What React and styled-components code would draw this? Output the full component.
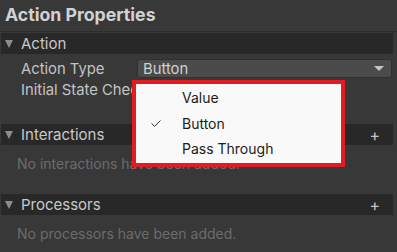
import React from "react";
import styled, { createGlobalStyle } from "styled-components";

const GlobalStyle = createGlobalStyle`
  html, body {
    margin: 0;
    padding: 0;
    background: #383838;
  }
  body {
    font-family: Inter, "Noto Sans", sans-serif;
  }
`;

const Panel = styled.div`
  position: relative;
  width: 397px;
  height: 252px;
  overflow: hidden;
  background: #383838;
  color: #c4c4c4;
  font-size: 14px;
`;

const Title = styled.h1`
  margin: 0 0 1px;
  height: 32px;
  padding-left: 5px;
  font-size: 17.7px;
  font-weight: 700;
  line-height: 30px;
  color: #d2d2d2;
  border-bottom: 1px solid #2c2c2c;
  box-sizing: border-box;
`;

const Header = styled.div`
  display: flex;
  align-items: center;
  height: 21px;
  margin: 0 4px 0 1px;
  padding: 0 13px 0 4px;
  background: #282828;
  color: #c8c8c8;
  font-size: 15px;
`;

const Caret = styled.span`
  width: 0;
  height: 0;
  margin-right: 8px;
  border-left: 4px solid transparent;
  border-right: 4px solid transparent;
  border-top: 8px solid #8c8c8c;
`;

const HeaderText = styled.span`
  flex: 1;
`;

const Plus = styled.span`
  font-size: 16px;
  line-height: 1;
  color: #c4c4c4;
`;

const Body = styled.div`
  padding: ${(p) => p.$pad};
`;

const Row = styled.div`
  display: flex;
  align-items: center;
  height: 21px;
  padding: 0 5px 0 21px;
  white-space: nowrap;
  font-size: 14.8px;
`;

const Label = styled.span`
  width: 111px;
  overflow: hidden;
`;

const Dropdown = styled.div`
  flex: 1;
  display: flex;
  align-items: center;
  justify-content: space-between;
  height: 19px;
  margin-left: 5px;
  padding: 0 7px 0 5px;
  background: #4b4b4b;
  border: 1px solid #303030;
  border-radius: 3px;
  box-sizing: border-box;
  color: #d0d0d0;
`;

const Arrow = styled.span`
  width: 0;
  height: 0;
  border-left: 5px solid transparent;
  border-right: 5px solid transparent;
  border-top: 5px solid #c4c4c4;
`;

const Empty = styled.div`
  padding: 9px 0 20px 17px;
  line-height: 20px;
  color: #6c6c6c;
`;

const Popup = styled.div`
  position: absolute;
  left: 132px;
  top: 80px;
  width: 213px;
  height: 87px;
  box-sizing: border-box;
  border: 4px solid #e31c23;
  background: #f9f9f9;
  padding-top: 1px;
`;

const Item = styled.div`
  position: relative;
  height: 25.5px;
  line-height: 25.5px;
  padding-left: 46px;
  color: #1b1b1b;
`;

const Check = styled.svg`
  position: absolute;
  left: 15px;
  top: 9px;
`;

const Section = ({ title, plus, children }) => (
  <section>
    <Header>
      <Caret />
      <HeaderText>{title}</HeaderText>
      {plus && <Plus>+</Plus>}
    </Header>
    {children}
  </section>
);

const options = ["Value", "Button", "Pass Through"];

export default function App() {
  return (
    <>
      <GlobalStyle />
      <Panel>
        <Title>Action Properties</Title>
        <Section title="Action">
          <Body $pad="4px 0 24px">
            <Row>
              <Label>Action Type</Label>
              <Dropdown>
                <span>Button</span>
                <Arrow />
              </Dropdown>
            </Row>
            <Row>
              <Label>Initial State Check</Label>
            </Row>
          </Body>
        </Section>
        <Section title="Interactions" plus>
          <Empty>No interactions have been added.</Empty>
        </Section>
        <Section title="Processors" plus>
          <Empty>No processors have been added.</Empty>
        </Section>
        <Popup>
          {options.map((o) => (
            <Item key={o}>
              {o === "Button" && (
                <Check width="10" height="7" viewBox="0 0 10 7">
                  <path d="M0.5 3.5 L3.5 6.3 L9.5 0.5" fill="none" stroke="#333" strokeWidth="1" />
                </Check>
              )}
              {o}
            </Item>
          ))}
        </Popup>
      </Panel>
    </>
  );
}
